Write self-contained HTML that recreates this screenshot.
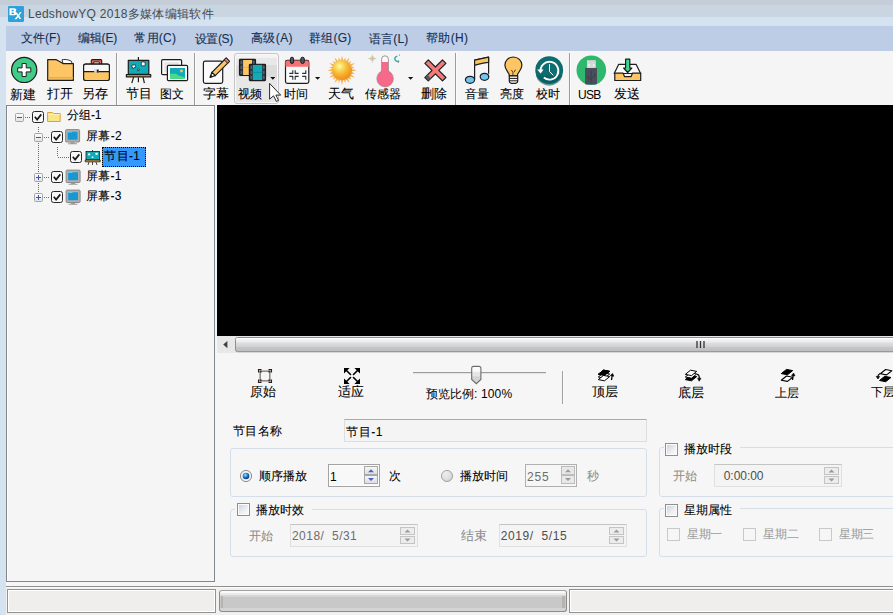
<!DOCTYPE html>
<html><head><meta charset="utf-8">
<style>
*{box-sizing:border-box}
html,body{margin:0;padding:0}
body{width:893px;height:615px;overflow:hidden;position:relative;background:#f6f6f6;font-family:"Liberation Sans",sans-serif;font-size:12px;color:#000}
.a{position:absolute}
.t{position:absolute;white-space:nowrap;line-height:14px;font-size:12px;-webkit-text-stroke:0.08px currentColor}
.ns{-webkit-text-stroke:0.1px currentColor}
.nt{-webkit-text-stroke:0}
.sep{position:absolute;width:1px;background:#9c9c9c;box-shadow:1px 0 0 #fcfcfc}
.gb{position:absolute;border:1px solid #d5dfe9;border-radius:3px}
.cb{position:absolute;width:13px;height:13px;border:1px solid #8e8f8f;background:linear-gradient(135deg,#c8d0dc,#eef0f2 60%,#fafafa);box-shadow:inset 0 0 0 1px #fbfbfb}
.cbd{position:absolute;width:13px;height:13px;border:1px solid #c9c9c9;background:#f6f6f6}
.spin{position:absolute;border:1px solid #e0e0e0;border-top-color:#bcbcbc;background:#f2f2f2}
.sb{position:absolute;width:15px;height:8px;border:1px solid #c0c0c0;background:#ececec}
.sb:after{content:"";position:absolute;left:4px;border-left:3px solid transparent;border-right:3px solid transparent}
.up:after{top:1px;border-bottom:3px solid #9a9a9a}
.dn:after{top:2px;border-top:3px solid #9a9a9a}
</style></head><body>
<!-- title bar -->
<div class="a" style="left:0;top:0;width:893px;height:5px;background:#c5ced8"></div>
<div class="a" style="left:0;top:5px;width:893px;height:12px;background:#c9d6e2"></div>
<div class="a" style="left:0;top:17px;width:893px;height:9px;background:#d5e3f0"></div>
<div class="a" style="left:0;top:26px;width:6px;height:589px;background:#d5e2ef"></div>
<!-- menu -->
<div class="a" style="left:6px;top:26px;width:887px;height:25px;background:#bccde5"></div>
<!-- toolbar -->
<div class="a" style="left:6px;top:51px;width:887px;height:54px;background:#f5f5f5"></div>
<div class="sep" style="left:116px;top:53px;height:52px"></div>
<div class="sep" style="left:194px;top:53px;height:52px"></div>
<div class="sep" style="left:455px;top:53px;height:52px"></div>
<div class="sep" style="left:569px;top:53px;height:52px"></div>
<!-- hover button -->
<div class="a" style="left:234px;top:53px;width:45px;height:51px;border:1px solid #c4c4c4;border-radius:3px;background:linear-gradient(#f3f3f3 0,#f3f3f3 4px,#e8e8e8 4px,#e8e8e8 11px,#dcdcdc 11px,#dcdcdc 23px,#e7e7e7 23px);box-shadow:inset 0 0 0 1px #fafafa"></div>
<!-- tree panel -->
<div class="a" style="left:6px;top:105px;width:209px;height:477px;border:1px solid #80878f;background:#f5f5f5;box-shadow:inset 1px 1px 0 #fdfdfd"></div>
<div class="a" style="left:102px;top:147px;width:44px;height:20px;background:#3399ff;border:1px dotted #000"></div>
<!-- preview -->
<div class="a" style="left:217px;top:105px;width:676px;height:231px;background:#000"></div>
<!-- h scrollbar -->
<div class="a" style="left:217px;top:336px;width:676px;height:17px;background:#e9e9e9"></div>
<!-- controls -->
<div class="sep" style="left:562px;top:371px;height:33px;background:#a0a0a0"></div>
<!-- name box -->
<div class="a" style="left:344px;top:419px;width:303px;height:23px;border:1px solid #dedede;border-top-color:#ababab;background:#f4f4f4"></div>
<!-- group boxes -->
<div class="gb" style="left:230px;top:448px;width:417px;height:49px"></div>
<div class="gb" style="left:230px;top:509px;width:417px;height:48px"></div>
<div class="gb" style="left:659px;top:447px;width:240px;height:50px"></div>
<div class="gb" style="left:659px;top:508px;width:240px;height:49px"></div>
<div class="a" style="left:235px;top:505px;width:77px;height:8px;background:#f6f6f6"></div>
<div class="a" style="left:664px;top:443px;width:76px;height:8px;background:#f6f6f6"></div>
<div class="a" style="left:664px;top:504px;width:76px;height:8px;background:#f6f6f6"></div>
<!-- checkboxes -->
<div class="cb" style="left:237px;top:503px"></div>
<div class="cb" style="left:665px;top:443px"></div>
<div class="cb" style="left:665px;top:504px"></div>
<div class="cbd" style="left:667px;top:528px"></div>
<div class="cbd" style="left:743px;top:528px"></div>
<div class="cbd" style="left:819px;top:528px"></div>
<!-- radios -->
<svg class="a" style="left:239px;top:469px" width="14" height="14" viewBox="0 0 14 14">
<defs><radialGradient id="rg1" cx="0.4" cy="0.35" r="0.6"><stop offset="0" stop-color="#9ee0ff"/><stop offset="0.5" stop-color="#2a8ad8"/><stop offset="1" stop-color="#0c3a80"/></radialGradient>
<radialGradient id="rg2" cx="0.4" cy="0.35" r="0.7"><stop offset="0" stop-color="#fafafa"/><stop offset="1" stop-color="#c8c8c8"/></radialGradient></defs>
<circle cx="7" cy="7" r="5.6" fill="#f4f4f4" stroke="#8c8c8c" stroke-width="1"/>
<circle cx="7" cy="7" r="3.3" fill="url(#rg1)"/>
</svg>
<svg class="a" style="left:440px;top:469px" width="14" height="14" viewBox="0 0 14 14">
<circle cx="7" cy="7" r="5.6" fill="url(#rg2)" stroke="#a8a8a8" stroke-width="1"/>
<circle cx="7" cy="7" r="3.8" fill="#e2e2e2" opacity="0.6"/>
</svg>
<!-- spin boxes -->
<div class="a" style="left:328px;top:464px;width:52px;height:23px;border:1px solid #a4a4a4;background:#f8f8f8;box-shadow:inset 0 0 0 1px #fdfdfd"></div>
<div class="a" style="left:364px;top:466px;width:14px;height:9px;border:1px solid #a8a8a8;background:linear-gradient(#f6f6f6,#dedede)"></div>
<div class="a" style="left:364px;top:475px;width:14px;height:9px;border:1px solid #a8a8a8;background:linear-gradient(#f6f6f6,#dedede)"></div>
<div class="a" style="left:525px;top:464px;width:52px;height:23px;border:1px solid #b0b0b0;background:#f6f6f6"></div>
<div class="a" style="left:561px;top:466px;width:14px;height:9px;border:1px solid #bcbcbc;background:#e8e8e8"></div>
<div class="a" style="left:561px;top:475px;width:14px;height:9px;border:1px solid #bcbcbc;background:#e8e8e8"></div>
<div class="a" style="left:290px;top:524px;width:128px;height:23px;border:1px solid #e0e0e0;border-top-color:#c4c4c4;background:#f4f4f4"></div>
<div class="a" style="left:400px;top:527px;width:15px;height:8px;border:1px solid #c4c4c4;background:#ececec"></div>
<div class="a" style="left:400px;top:536px;width:15px;height:8px;border:1px solid #c4c4c4;background:#ececec"></div>
<div class="a" style="left:499px;top:524px;width:128px;height:23px;border:1px solid #e0e0e0;border-top-color:#c4c4c4;background:#f4f4f4"></div>
<div class="a" style="left:609px;top:527px;width:15px;height:8px;border:1px solid #c4c4c4;background:#ececec"></div>
<div class="a" style="left:609px;top:536px;width:15px;height:8px;border:1px solid #c4c4c4;background:#ececec"></div>
<div class="a" style="left:714px;top:464px;width:128px;height:23px;border:1px solid #e0e0e0;border-top-color:#c4c4c4;background:#f4f4f4"></div>
<div class="a" style="left:824px;top:467px;width:15px;height:8px;border:1px solid #c4c4c4;background:#ececec"></div>
<div class="a" style="left:824px;top:476px;width:15px;height:8px;border:1px solid #c4c4c4;background:#ececec"></div>
<svg class="a" style="left:0;top:460px" width="893" height="90" viewBox="0 460 893 90">
<g fill="#4466c4"><path d="M368 472.3h6l-3-3z M368 478h6l-3 3z"/></g>
<g fill="#9a9a9a"><path d="M565 472.3h6l-3-3z M565 478h6l-3 3z"/>
<path d="M404.5 532.5h6l-3-3z M404.5 538.5h6l-3 3z M613.5 532.5h6l-3-3z M613.5 538.5h6l-3 3z M828.5 472.5h6l-3-3z M828.5 478.5h6l-3 3z"/></g>
</svg>
<!-- status -->
<div class="a" style="left:6px;top:586px;width:887px;height:1px;background:#8e8e8e"></div>
<div class="a" style="left:6px;top:587px;width:887px;height:28px;background:#f2efef"></div>
<div class="a" style="left:6px;top:587px;width:887px;height:1px;background:#fbfbfb"></div>
<div class="a" style="left:7px;top:589px;width:209px;height:24px;border:1px solid #929292;background:#f0eded;box-shadow:inset 0 0 0 1px #fff"></div>
<div class="a" style="left:569px;top:589px;width:330px;height:24px;border:1px solid #929292;background:#f0eded;box-shadow:inset 0 0 0 1px #fff"></div>
<div class="a" style="left:219px;top:590px;width:348px;height:22px;border:1px solid #8c8c8c;border-top-color:#a0a0a0;border-radius:3px;background:linear-gradient(#fafafa 0,#fafafa 2px,#eaeaea 2px,#eaeaea 4px,#d6d6d6 4px,#d6d6d6 6px,#c8c8c8 6px,#c8c8c8 17px,#d4d4d4 17px)"></div>
<div class="a" style="left:221px;top:596px;width:2px;height:12px;background:#b4b4b4"></div>
<div class="a" style="left:562px;top:596px;width:3px;height:12px;background:#b4b4b4"></div>
<!-- logo -->
<svg class="a" style="left:0;top:0" width="30" height="26" viewBox="0 0 30 26">
<rect x="8" y="6" width="16" height="16" rx="1.2" fill="#2ea0da"/>
<path d="M9.5 8.3h4.3c1.6 0 2.5 0.8 2.5 1.8c0 0.8-0.5 1.3-1.1 1.5c0.9 0.2 1.4 0.9 1.4 1.7c0 1.2-1 2-2.6 2H9.5z M11.6 9.8v1.4h1.5c0.5 0 0.8-0.3 0.8-0.7s-0.3-0.7-0.8-0.7z M11.6 12.5v1.5h1.7c0.6 0 0.9-0.3 0.9-0.75s-0.3-0.75-0.9-0.75z" fill="#fff"/>
<path d="M15.5 12.8l1.6 0l1.3 2l1.6-2.8l1.6 0l-2.4 3.8l2 3.3h-1.7l-1.3-2.1l-1.6 2.3h-2.2l2.8-3.4z" fill="#fff"/>
</svg>
<!-- toolbar icons -->
<svg class="a" style="left:0;top:50px" width="893" height="56" viewBox="0 50 893 56">
<g stroke="#1d1d1d" stroke-width="1.2" stroke-linejoin="round">
<!-- new -->
<circle cx="24.2" cy="69.9" r="12.6" fill="#3fcd88"/>
<path d="M22.1 63.5h4.1v4.4h4.6v4h-4.6v4.6h-4.1v-4.6h-4.4v-4h4.4z" fill="#fff" stroke-width="1"/>
<!-- open folder -->
<path d="M62 59.8c2 -0.6 6 -0.6 9.5 1.5l0.5 2.2h-9z" fill="#fff" stroke-width="0.9"/>
<path d="M47.7 59.7h8.6l6.8 3.9h10.3v16.7h-25.7z" fill="#fec565"/>
<path d="M48.3 77.8h25" stroke="#e0ac52" stroke-width="1.3"/>
<!-- save briefcase -->
<rect x="91.3" y="59.6" width="10.4" height="5.5" rx="1" fill="#f06a55" stroke-width="1.1"/>
<rect x="93.7" y="61.9" width="5.6" height="3" fill="#fafafa" stroke-width="0.9"/>
<rect x="83.6" y="64.2" width="25.8" height="16.3" rx="2" fill="#fec565"/>
<path d="M83.6 71.6v-5.4a2 2 0 0 1 2-2h21.8a2 2 0 0 1 2 2v5.4z" fill="#f7f7f7"/>
<rect x="94.2" y="69.2" width="4.5" height="3.5" fill="#d8d8d8" stroke="none"/>
<rect x="96.8" y="69.6" width="1.9" height="3" fill="#222" stroke="none"/>
<!-- easel -->
<path d="M138.4 57v3" />
<rect x="128.3" y="60.4" width="20.5" height="14" fill="#13aab8"/>
<path d="M126.4 74.6h24.3v2.3h-24.3z" fill="#e8b048"/>
<path d="M133.6 77.2l-1.8 6 M138.4 77.2v5 M143 77.2l1.4 6" fill="none"/>
<path d="M132 65h3.6v2.6h-1.4l-1 1.2l-0.2-1.2h-1z" fill="#fff" stroke-width="0.7"/>
<rect x="141.3" y="62" width="3.8" height="3.8" fill="#fff" stroke-width="0.7"/>
<path d="M137.8 68.6l1.9 1.2l-2 1.2z" fill="#fff" stroke-width="0.7"/>
<!-- picture -->
<rect x="161.6" y="59.6" width="20" height="15" rx="1.2" fill="#fafafa"/>
<rect x="164.3" y="62.3" width="14.4" height="10" fill="#e6e6e6" stroke="none"/>
<rect x="167.4" y="65.4" width="20.2" height="15.2" rx="1.2" fill="#fafafa"/>
<path d="M170 68h15v11h-15z" fill="#13aab8" stroke="none"/>
<path d="M170 73.8l6 0l3 2l2.5 0.5l3.5 1.2v1.5h-15z" fill="#4ad98a" stroke="none"/>
<circle cx="181.5" cy="71" r="1.4" fill="#fec565" stroke="none"/>
<!-- text pencil -->
<rect x="203.4" y="61.1" width="19.3" height="22.3" rx="1.8" fill="#fafafa"/>
<path d="M211.9 72.3l14.3-14.3l3.3 3.3l-14.3 14.3z" fill="#fec565"/>
<path d="M224.3 59.9l3.3 3.3l1.9-1.9l-3.3-3.3z" fill="#f07880" stroke-width="1"/>
<path d="M211.9 72.3l3.3 3.3l-5 1.7z" fill="#fff"/>
<path d="M210.2 77.3l1.8-0.6l-1.2-1.2z" fill="#111"/>
<!-- film -->
<rect x="239.5" y="59.4" width="16" height="16" rx="0.8" fill="#2c3338"/>
<rect x="243.1" y="60" width="8.9" height="15" fill="#fec565" stroke="none"/>
<path d="M243.1 67.4h8.9" stroke="#e0a848" stroke-width="0.8"/>
<g fill="#566068" stroke="none"><rect x="240.6" y="60.8" width="1.6" height="3.2"/><rect x="240.6" y="65.8" width="1.6" height="3.2"/><rect x="240.6" y="70.8" width="1.6" height="3.2"/><rect x="252.9" y="60.8" width="1.6" height="3.2"/></g>
<rect x="249.4" y="64.3" width="16.1" height="16.3" rx="0.8" fill="#2c3338"/>
<rect x="252.8" y="64.9" width="9.4" height="15.1" fill="#13aab8" stroke="none"/>
<path d="M252.8 72.4h9.4" stroke="#0e8a95" stroke-width="0.8"/>
<g fill="#566068" stroke="none"><rect x="250.5" y="65.8" width="1.6" height="3.2"/><rect x="250.5" y="70.8" width="1.6" height="3.2"/><rect x="250.5" y="75.8" width="1.6" height="3.2"/><rect x="263" y="65.8" width="1.6" height="3.2"/><rect x="263" y="70.8" width="1.6" height="3.2"/><rect x="263" y="75.8" width="1.6" height="3.2"/></g>
<!-- calendar -->
<rect x="285.5" y="60.4" width="23.3" height="23" rx="1.8" fill="#fafafa"/>
<path d="M285.5 66.8v-4.6a1.8 1.8 0 0 1 1.8-1.8h19.7a1.8 1.8 0 0 1 1.8 1.8v4.6z" fill="#f87272" stroke="none"/>
<rect x="290.4" y="57.2" width="3.2" height="6.3" rx="1.6" fill="#4b5763" stroke-width="1"/>
<rect x="300.8" y="57.2" width="3.5" height="6.3" rx="1.7" fill="#4b5763" stroke-width="1"/>
<path d="M289.3 73.4h3.5v-3.2 M298.6 73.4h-3.4v-3.2 M302.2 73.4h3.6v-3.2 M289.3 76.4h3.5v3.4 M298.6 76.4h-3.4v3.4 M302.2 76.4h3.6v3.4" fill="none" stroke="#2b3038" stroke-width="1.1"/>
<!-- delete X -->
<path d="M428.3 59.9l7.1 7.1l7.1-7.1l3.4 3.4l-7.1 7.1l7.1 7.1l-3.4 3.4l-7.1-7.1l-7.1 7.1l-3.4-3.4l7.1-7.1l-7.1-7.1z" fill="#f87878"/>
<path d="M425.1 77.1l2.3-2.3l3.4 3.4l-2.3 2.3z" fill="#505860" stroke="none"/>
<!-- music -->
<path d="M474.6 79.2v-19l14-3v16.5" fill="none"/>
<path d="M474.6 60.2l14-3.1v5.3c-4.8 0.4-9.2 1.6-14 2.8z" fill="#fcc460"/>
<ellipse cx="470" cy="79.8" rx="4.6" ry="3.5" fill="#70c6f2"/>
<ellipse cx="484.5" cy="76.8" rx="4.3" ry="3.5" fill="#70c6f2"/>
<!-- bulb -->
<path d="M513.3 57c-4.8 0-8.4 3.7-8.4 8.2c0 3.6 2.6 6 4.3 9.3v1.4h8.3v-1.4c1.8-3.3 4.4-5.7 4.4-9.3c0-4.5-3.8-8.2-8.6-8.2z" fill="#fec565"/>
<path d="M509.3 75.9h8.4v5.3c0 1-1.4 2.2-4.2 2.2s-4.2-1.2-4.2-2.2z" fill="#f8f8f8"/>
<path d="M509.3 78.4h8.4 M509.3 80.8h8.4" stroke-width="1"/>
<path d="M511.4 70l1.5 2.2v3.5 M515.5 69.6l-1.4 2.6" fill="none" stroke-width="0.8"/>
</g>
<!-- sun -->
<defs>
<radialGradient id="sg" cx="0.38" cy="0.3" r="0.75">
<stop offset="0" stop-color="#fffac0"/><stop offset="0.22" stop-color="#fae060"/><stop offset="0.5" stop-color="#f8b838"/><stop offset="0.8" stop-color="#f29a20"/><stop offset="1" stop-color="#ee8c18"/>
</radialGradient>
<radialGradient id="cg" cx="0.5" cy="0.5" r="0.5">
<stop offset="0" stop-color="#127a7a"/><stop offset="1" stop-color="#0b6a6c"/>
</radialGradient>
</defs>
<polygon points="342.00,55.50 343.25,60.78 345.42,57.55 345.67,61.43 349.40,57.48 347.84,62.68 351.33,60.97 349.62,64.46 354.82,62.90 350.87,66.63 354.75,66.88 351.52,69.05 356.80,70.30 351.52,71.55 354.75,73.72 350.87,73.97 354.82,77.70 349.62,76.14 351.33,79.63 347.84,77.92 349.40,83.12 345.67,79.17 345.42,83.05 343.25,79.82 342.00,85.10 340.75,79.82 338.58,83.05 338.33,79.17 334.60,83.12 336.16,77.92 332.67,79.63 334.38,76.14 329.18,77.70 333.13,73.97 329.25,73.72 332.48,71.55 327.20,70.30 332.48,69.05 329.25,66.88 333.13,66.63 329.18,62.90 334.38,64.46 332.67,60.97 336.16,62.68 334.60,57.48 338.33,61.43 338.58,57.55 340.75,60.78" fill="#f4a030" opacity="0.8"/>
<circle cx="342" cy="70.3" r="10" fill="url(#sg)"/>
<!-- thermometer -->
<g>
<circle cx="372.3" cy="58.6" r="2" fill="#f4e860" stroke="#c8c090" stroke-width="0.5"/>
<path d="M372.3 54.6v8 M368.3 58.6h8" stroke="#a8a8a8" stroke-width="0.5"/>
<path d="M397.3 56.2a2.6 2.6 0 1 0 1.8 4.6" fill="none" stroke="#40a8a8" stroke-width="1.5"/><circle cx="399.5" cy="55" r="0.5" fill="#555"/><circle cx="398.5" cy="62.3" r="0.5" fill="#777"/>
<path d="M381.6 59.2a3.4 3.4 0 0 1 6.8 0v13.5h-6.8z" fill="#fafafa" stroke="#707070" stroke-width="0.7"/>
<rect x="381.9" y="62" width="6.2" height="11" fill="#f86888" stroke="none"/>
<circle cx="385.1" cy="78.6" r="8.3" fill="#f86888" stroke="#8a8a8a" stroke-width="0.6"/>
<rect x="382" y="68" width="6" height="4" fill="#f86888" stroke="none"/>
</g>
<!-- clock -->
<circle cx="549.2" cy="70.2" r="13.9" fill="url(#cg)"/>

<circle cx="549.5" cy="70.5" r="8.3" fill="#0c6e70"/><path d="M535.8 75.5h26.8a13.9 13.9 0 0 1-26.8 0z" fill="#095a5e" opacity="0.6"/><path d="M540.6 71.8a8.9 8.9 0 1 1 3.2 5.8" fill="none" stroke="#fff" stroke-width="1.9"/>
<path d="M537.2 69.6l3.4 3.8l3-3.8z" fill="#fff"/>
<path d="M549.5 64.2v7.3l3.8 3.8" fill="none" stroke="#fff" stroke-width="1"/>
<!-- usb -->
<circle cx="591.3" cy="70.3" r="14.8" fill="#2db86e"/>
<rect x="587" y="60.2" width="8.8" height="8" fill="#d6d6d6"/>
<rect x="588.3" y="64.5" width="1.6" height="1.4" fill="#fff"/>
<rect x="593" y="64.5" width="1.6" height="1.4" fill="#fff"/>
<path d="M585.1 68h11.9v15.2a1.4 1.4 0 0 1-1.4 1.4h-9.1a1.4 1.4 0 0 1-1.4-1.4z" fill="#4a4e5c"/>
<path d="M591.2 70.5v13 M588 75.5v2.5l3 1.5 M594.7 73.5v3l-3.3 1.5" fill="none" stroke="#3a3d48" stroke-width="0.8"/>
<!-- send inbox -->
<g stroke="#1d1d1d" stroke-width="1.2" stroke-linejoin="round">
<path d="M618.6 64.4h17.6l4.4 9.1h-26.4z" fill="#fafafa"/>
<path d="M614.8 73.1h8.2l1.5 3.5h6.6l1.5-3.5h8.1v7.4h-25.9z" fill="#fec565"/>
<path d="M625.6 59.2h4.2v8.8h2l-4.1 4.5l-4.1-4.5h2z" fill="#40d890"/>
</g>
<!-- dropdown arrows -->
<path d="M270.2 77h5.2l-2.6 2.8z M315 77h5.2l-2.6 2.8z M408 77h5.2l-2.6 2.8z" fill="#111"/>
<!-- cursor -->
<path d="M269.6 83.4V99.2l3.9-3.4l2.9 5.6l2.2-1l-2.7-5.3h4.8z" fill="#fff" stroke="#111" stroke-width="0.9" stroke-linejoin="miter"/>
</svg>
<!-- tree -->
<svg class="a" style="left:0;top:100px" width="215" height="110" viewBox="0 100 215 110">
<defs>
<linearGradient id="eg" x1="0" y1="0" x2="0" y2="1"><stop offset="0" stop-color="#fdfdfd"/><stop offset="1" stop-color="#e2e2e2"/></linearGradient>
</defs>
<g fill="none" stroke="#6a6a6a" stroke-width="1" stroke-dasharray="1 1">
<path d="M25 117.5h6"/>
<path d="M38.5 127v6 M38.5 143v30 M38.5 183v10"/>
<path d="M44 137.5h6 M44 177.5h6 M44 197.5h6"/>
<path d="M57.5 147v10"/>
<path d="M58 157.5h11"/>
</g>
<g transform="translate(15 113)"><rect x="0.5" y="0.5" width="8" height="8" rx="1" fill="url(#eg)" stroke="#a4a4a4"/><path d="M2 4.5h5" stroke="#3a58b0" stroke-width="1"/></g>
<g transform="translate(32 111)"><rect x="0.5" y="0.5" width="11" height="11" rx="2" fill="#f8f8f8" stroke="#262626"/><path d="M2.8 5.8l2.3 2.8l4.2-5.2" fill="none" stroke="#1a1a1a" stroke-width="1.7"/></g>
<path d="M47.6 112.5h5l1 1h6.6v8h-12.6z" fill="#f8e688" stroke="#dca040" stroke-width="1"/>
<path d="M48 114.5h12" stroke="#fff4b8" stroke-width="0.8"/>
<g transform="translate(34 133)"><rect x="0.5" y="0.5" width="8" height="8" rx="1" fill="url(#eg)" stroke="#a4a4a4"/><path d="M2 4.5h5" stroke="#3a58b0" stroke-width="1"/></g>
<g transform="translate(51 131)"><rect x="0.5" y="0.5" width="11" height="11" rx="2" fill="#f8f8f8" stroke="#262626"/><path d="M2.8 5.8l2.3 2.8l4.2-5.2" fill="none" stroke="#1a1a1a" stroke-width="1.7"/></g>
<g transform="translate(65 129)"><rect x="0.6" y="0.6" width="14" height="12.4" rx="1" fill="#b0b0b0" stroke="#8a8a8a" stroke-width="1"/><rect x="2.7" y="2.7" width="9.8" height="8" fill="#1898d0"/><path d="M3 3h4" stroke="#7ad8f0" stroke-width="0.8"/><path d="M5.5 13.2h4v1h2.5v1h-9v-1h2.5z" fill="#9a9a9a"/></g>
<g transform="translate(70 151)"><rect x="0.5" y="0.5" width="11" height="11" rx="2" fill="#f8f8f8" stroke="#262626"/><path d="M2.8 5.8l2.3 2.8l4.2-5.2" fill="none" stroke="#1a1a1a" stroke-width="1.7"/></g>
<g stroke="#1d1d1d" stroke-width="0.8">
<rect x="86" y="151.5" width="13.5" height="8.5" fill="#13aab8"/>
<path d="M85.2 160h15v1.8h-15z" fill="#e0a848"/>
<path d="M92.5 150v1.5 M89 162l-1 3 M92.5 162v3 M96 162l1 3" fill="none"/>
</g>
<rect x="88" y="153.5" width="2.2" height="1.8" fill="#fff"/><rect x="95.5" y="152.8" width="2.2" height="2" fill="#fff"/><rect x="91.8" y="156.5" width="1.5" height="1.5" fill="#fff"/>
<g transform="translate(34 173)"><rect x="0.5" y="0.5" width="8" height="8" rx="1" fill="url(#eg)" stroke="#a4a4a4"/><path d="M2 4.5h5 M4.5 2v5" stroke="#3a58b0" stroke-width="1"/></g>
<g transform="translate(51 171)"><rect x="0.5" y="0.5" width="11" height="11" rx="2" fill="#f8f8f8" stroke="#262626"/><path d="M2.8 5.8l2.3 2.8l4.2-5.2" fill="none" stroke="#1a1a1a" stroke-width="1.7"/></g>
<g transform="translate(65.5 169.5)"><rect x="0.6" y="0.6" width="14" height="12.4" rx="1" fill="#b0b0b0" stroke="#8a8a8a" stroke-width="1"/><rect x="2.7" y="2.7" width="9.8" height="8" fill="#1898d0"/><path d="M3 3h4" stroke="#7ad8f0" stroke-width="0.8"/><path d="M5.5 13.2h4v1h2.5v1h-9v-1h2.5z" fill="#9a9a9a"/></g>
<g transform="translate(34 193)"><rect x="0.5" y="0.5" width="8" height="8" rx="1" fill="url(#eg)" stroke="#a4a4a4"/><path d="M2 4.5h5 M4.5 2v5" stroke="#3a58b0" stroke-width="1"/></g>
<g transform="translate(51 191)"><rect x="0.5" y="0.5" width="11" height="11" rx="2" fill="#f8f8f8" stroke="#262626"/><path d="M2.8 5.8l2.3 2.8l4.2-5.2" fill="none" stroke="#1a1a1a" stroke-width="1.7"/></g>
<g transform="translate(65.5 189.5)"><rect x="0.6" y="0.6" width="14" height="12.4" rx="1" fill="#b0b0b0" stroke="#8a8a8a" stroke-width="1"/><rect x="2.7" y="2.7" width="9.8" height="8" fill="#1898d0"/><path d="M3 3h4" stroke="#7ad8f0" stroke-width="0.8"/><path d="M5.5 13.2h4v1h2.5v1h-9v-1h2.5z" fill="#9a9a9a"/></g>
</svg>
<!-- scrollbar + controls -->
<svg class="a" style="left:215px;top:336px" width="678" height="70" viewBox="215 336 678 70">
<defs>
<linearGradient id="thg" x1="0" y1="0" x2="0" y2="1">
<stop offset="0" stop-color="#fbfbfb"/><stop offset="0.3" stop-color="#ececec"/><stop offset="0.42" stop-color="#dcdcdc"/><stop offset="0.62" stop-color="#d0d4da"/><stop offset="0.7" stop-color="#c6c6c6"/><stop offset="1" stop-color="#bdbdbd"/>
</linearGradient>
<linearGradient id="slg" x1="0" y1="0" x2="0" y2="1">
<stop offset="0" stop-color="#fdfdfd"/><stop offset="0.3" stop-color="#f6f6f6"/><stop offset="0.35" stop-color="#e6e6e6"/><stop offset="0.55" stop-color="#e6e6e6"/><stop offset="0.6" stop-color="#d4d4d4"/><stop offset="1" stop-color="#d4d4d4"/>
</linearGradient>
</defs>
<rect x="217" y="336" width="676" height="17" fill="#e8e8e8"/>
<path d="M227.4 341l-4.2 3.6l4.2 3.6z" fill="#404040"/>
<rect x="235.5" y="337.5" width="700" height="14.2" rx="2" fill="url(#thg)" stroke="#8e8e8e" stroke-width="1"/>
<path d="M236.5 338.5h680" stroke="#fff" stroke-width="1"/>
<path d="M697 341v7 M700.5 341v7 M704 341v7" stroke="#333" stroke-width="1.3"/>
<!-- 原始 -->
<g>
<rect x="260.2" y="371.2" width="9.6" height="9.6" fill="none" stroke="#8e8e8e" stroke-width="1.6"/>
<path d="M258.5 372.5v-3h3 M268.5 369.5h3v3 M271.5 379.5v3h-3 M261.5 382.5h-3v-3" fill="none" stroke="#2a1e1e" stroke-width="1.1"/>
<rect x="259.6" y="370.6" width="2" height="2" fill="#4a3434"/><rect x="268.4" y="370.6" width="2" height="2" fill="#4a3434"/><rect x="259.6" y="379.4" width="2" height="2" fill="#4a3434"/><rect x="268.4" y="379.4" width="2" height="2" fill="#4a3434"/>
</g>
<!-- 适应 -->
<g fill="#000">
<path d="M344 368h5.6l-5.6 5.6z M360 368h-5.6l5.6 5.6z M344 384h5.6l-5.6-5.6z M360 384v-5.6l-5.6 5.6z"/>
<path d="M346 370l4.5 4.5 M358 370l-4.5 4.5 M346 382l4.5-4.5 M358 382l-4.5-4.5" stroke="#000" stroke-width="1.6" stroke-linecap="round"/>
</g>
<!-- slider -->
<path d="M413 372.5h133" stroke="#9c9c9c" stroke-width="1"/>
<path d="M413 373.6h133" stroke="#e2e2e2" stroke-width="1"/>
<path d="M471.7 368.2a1.8 1.8 0 0 1 1.8-1.8h5.6a1.8 1.8 0 0 1 1.8 1.8v11.2l-4.6 4.3l-4.6-4.3z" fill="url(#slg)" stroke="#6c6c6c" stroke-width="1.1"/>
<!-- 顶层 -->
<g stroke="#000" stroke-linejoin="round">
<path d="M598.3 374.3l5.2-4.2l6.2 1.2l-5.2 4.2z" fill="#000" stroke-width="1"/>
<path d="M598.3 377l5.2-4.2l6.2 1.2l-5.2 4.2z" fill="#fff" stroke-width="1"/>
<path d="M598.3 379.6l5.2-4.2l6.2 1.2l-5.2 4.2z" fill="#fff" stroke-width="1"/>
<path d="M598.3 374.3l5.2-4.2l6.2 1.2l-5.2 4.2z" fill="#000" stroke-width="1"/>
<path d="M611.5 380l0.8-5" fill="none" stroke-width="1.3"/>
<path d="M610.3 375.6l2.2-2.2l1.4 2.8z" fill="#000" stroke-width="0.6"/>
</g>
<!-- 底层 -->
<g stroke="#000" stroke-linejoin="round">
<path d="M685.3 379.6l5.2-4.2l6.2 1.2l-5.2 4.2z" fill="#000" stroke-width="1"/>
<path d="M685.3 377l5.2-4.2l6.2 1.2l-5.2 4.2z" fill="#fff" stroke-width="1"/>
<path d="M685.3 374.4l5.2-4.2l6.2 1.2l-5.2 4.2z" fill="#fff" stroke-width="1"/>
<path d="M697 374.3c1.6 0 2.3 1.5 2.3 4" fill="none" stroke-width="1.2"/>
<path d="M697.6 378.2h3.4l-1.8 3z" fill="#000" stroke-width="0.6"/>
</g>
<!-- 上层 -->
<g stroke="#000" stroke-linejoin="round">
<path d="M781.3 380.2l5.2-4.2l6.2 1.2l-5.2 4.2z" fill="#fff" stroke-width="1.1"/>
<path d="M781.3 373.6l5.2-4.2l6.2 1.2l-5.2 4.2z" fill="#000" stroke-width="1"/>
<path d="M792.5 380l0.7-5" fill="none" stroke-width="1.3"/>
<path d="M791.5 375.4l2.1-2.3l1.4 2.8z" fill="#000" stroke-width="0.6"/>
</g>
<!-- 下层 -->
<g stroke="#000" stroke-linejoin="round">
<path d="M880.4 373.7l5.2-4.2l6.2 1.2l-5.2 4.2z" fill="#fff" stroke-width="1.1"/>
<path d="M879.5 380.5l5.2-4.2l6.2 1.2l-5.2 4.2z" fill="#000" stroke-width="1"/>
<path d="M880 373.5c-1.4 0.8-2.2 2-2.2 3.5" fill="none" stroke-width="1.2"/>
<path d="M876.2 376.4h3.4l-1.6 2.6z" fill="#000" stroke-width="0.6"/>
</g>
</svg>

<div class="t nt" id="title" style="left:27.90px;top:7.46px;color:#454b54;font-size:12.00px;letter-spacing:0.32px">LedshowYQ 2018多媒体编辑软件</div>
<div class="t ns" id="m1" style="left:20.96px;top:31.30px;color:#142f55;font-size:12.00px;letter-spacing:0.04px">文件(F)</div>
<div class="t ns" id="m2" style="left:78.00px;top:30.90px;color:#142f55;font-size:12.00px;letter-spacing:-0.20px">编辑(E)</div>
<div class="t ns" id="m3" style="left:134.26px;top:30.90px;color:#142f55;font-size:12.00px;letter-spacing:0.26px">常用(C)</div>
<div class="t ns" id="m4" style="left:194.80px;top:31.70px;color:#142f55;font-size:12.00px;letter-spacing:-0.40px">设置(S)</div>
<div class="t ns" id="m5" style="left:250.96px;top:31.30px;color:#142f55;font-size:12.00px;letter-spacing:0.40px">高级(A)</div>
<div class="t ns" id="m6" style="left:309.10px;top:30.90px;color:#142f55;font-size:12.00px;letter-spacing:0.18px">群组(G)</div>
<div class="t ns" id="m7" style="left:369.04px;top:32.10px;color:#142f55;font-size:12.00px;letter-spacing:0.16px">语言(L)</div>
<div class="t ns" id="m8" style="left:426.00px;top:31.30px;color:#142f55;font-size:12.00px;letter-spacing:0.34px">帮助(H)</div>
<div class="t" id="b1" style="left:10.00px;top:88.20px;color:#000;font-size:12.85px;letter-spacing:0.00px">新建</div>
<div class="t" id="b2" style="left:46.76px;top:87.00px;color:#000;font-size:12.51px;letter-spacing:0.00px">打开</div>
<div class="t" id="b3" style="left:81.94px;top:87.40px;color:#000;font-size:13.18px;letter-spacing:0.00px">另存</div>
<div class="t" id="b4" style="left:125.70px;top:87.40px;color:#000;font-size:12.73px;letter-spacing:0.00px">节目</div>
<div class="t" id="b5" style="left:160.08px;top:87.40px;color:#000;font-size:12.32px;letter-spacing:0.00px">图文</div>
<div class="t" id="b6" style="left:202.94px;top:87.40px;color:#000;font-size:12.62px;letter-spacing:0.00px">字幕</div>
<div class="t" id="b7" style="left:237.76px;top:86.90px;color:#000;font-size:12.38px;letter-spacing:0.00px">视频</div>
<div class="t" id="b8" style="left:284.00px;top:87.00px;color:#000;font-size:11.50px;letter-spacing:0.00px">时间</div>
<div class="t" id="b9" style="left:328.00px;top:87.00px;color:#000;font-size:12.69px;letter-spacing:0.00px">天气</div>
<div class="t" id="b10" style="left:364.80px;top:87.40px;color:#000;font-size:12.04px;letter-spacing:0.00px">传感器</div>
<div class="t" id="b11" style="left:421.14px;top:87.40px;color:#000;font-size:12.94px;letter-spacing:0.00px">删除</div>
<div class="t" id="b12" style="left:464.76px;top:87.40px;color:#000;font-size:11.50px;letter-spacing:0.00px">音量</div>
<div class="t" id="b13" style="left:499.76px;top:87.40px;color:#000;font-size:11.50px;letter-spacing:0.00px">亮度</div>
<div class="t" id="b14" style="left:535.80px;top:87.00px;color:#000;font-size:11.50px;letter-spacing:0.00px">校时</div>
<div class="t nt" id="b15" style="left:577.90px;top:87.78px;color:#000;font-size:12.00px;letter-spacing:-0.60px">USB</div>
<div class="t" id="b16" style="left:614.06px;top:87.40px;color:#000;font-size:12.67px;letter-spacing:0.00px">发送</div>
<div class="t" id="tr1" style="left:67.06px;top:108.44px;color:#000;font-size:12.00px;letter-spacing:-0.06px">分组-1</div>
<div class="t" id="tr2" style="left:85.94px;top:128.60px;color:#000;font-size:12.00px;letter-spacing:0.37px">屏幕-2</div>
<div class="t" id="tr3" style="left:104.40px;top:149.08px;color:#000;font-size:12.00px;letter-spacing:0.27px">节目-1</div>
<div class="t" id="tr4" style="left:86.00px;top:169.46px;color:#000;font-size:12.00px;letter-spacing:0.27px">屏幕-1</div>
<div class="t" id="tr5" style="left:86.00px;top:189.46px;color:#000;font-size:12.00px;letter-spacing:0.27px">屏幕-3</div>
<div class="t" id="c1" style="left:249.94px;top:385.20px;color:#000;font-size:12.70px;letter-spacing:0.00px">原始</div>
<div class="t" id="c2" style="left:337.80px;top:385.20px;color:#000;font-size:12.55px;letter-spacing:0.00px">适应</div>
<div class="t nt" id="c3" style="left:425.64px;top:387.36px;color:#000;font-size:12.00px;letter-spacing:0.12px">预览比例: 100%</div>
<div class="t" id="c4" style="left:591.76px;top:385.20px;color:#000;font-size:12.58px;letter-spacing:0.00px">顶层</div>
<div class="t" id="c5" style="left:678.00px;top:385.90px;color:#000;font-size:12.98px;letter-spacing:0.00px">底层</div>
<div class="t" id="c6" style="left:774.64px;top:385.60px;color:#000;font-size:12.00px;letter-spacing:0.00px">上层</div>
<div class="t" id="c7" style="left:870.66px;top:385.20px;color:#000;font-size:12.00px;letter-spacing:0.00px">下层</div>
<div class="t" id="f1" style="left:232.50px;top:424.10px;color:#000;font-size:12.00px;letter-spacing:0.50px">节目名称</div>
<div class="t" id="f2" style="left:345.96px;top:424.70px;color:#000;font-size:12.00px;letter-spacing:0.62px">节目-1</div>
<div class="t" id="f3" style="left:258.78px;top:469.32px;color:#000;font-size:12.14px;letter-spacing:0.00px">顺序播放</div>
<div class="t nt" id="f4" style="left:329.96px;top:469.72px;color:#000;font-size:12.00px;letter-spacing:0.00px">1</div>
<div class="t" id="f5" style="left:389.00px;top:468.92px;color:#000;font-size:12.00px;letter-spacing:0.00px">次</div>
<div class="t" id="f6" style="left:459.64px;top:469.32px;color:#000;font-size:12.00px;letter-spacing:0.00px">播放时间</div>
<div class="t nt" id="f7" style="left:526.98px;top:469.72px;color:#6d6d6d;font-size:12.00px;letter-spacing:0.78px">255</div>
<div class="t" id="f8" style="left:586.72px;top:469.32px;color:#8d8d8d;font-size:12.00px;letter-spacing:0.00px">秒</div>
<div class="t" id="f9" style="left:255.74px;top:502.84px;color:#000;font-size:12.45px;letter-spacing:0.00px">播放时效</div>
<div class="t" id="f10" style="left:248.80px;top:528.98px;color:#8d8d8d;font-size:11.62px;letter-spacing:0.00px">开始</div>
<div class="t nt" id="f11" style="left:291.94px;top:529.38px;color:#6d6d6d;font-size:12.00px;letter-spacing:0.48px">2018/&nbsp; 5/31</div>
<div class="t" id="f12" style="left:460.78px;top:529.38px;color:#8d8d8d;font-size:12.63px;letter-spacing:0.00px">结束</div>
<div class="t nt" id="f13" style="left:500.84px;top:529.38px;color:#4d4d4d;font-size:12.00px;letter-spacing:0.58px">2019/&nbsp; 5/15</div>
<div class="t" id="f14" style="left:683.80px;top:442.40px;color:#000;font-size:12.46px;letter-spacing:0.00px">播放时段</div>
<div class="t" id="f15" style="left:672.82px;top:468.66px;color:#8d8d8d;font-size:12.24px;letter-spacing:0.00px">开始</div>
<div class="t nt" id="f16" style="left:723.70px;top:469.06px;color:#4d4d4d;font-size:12.00px;letter-spacing:-0.03px">0:00:00</div>
<div class="t" id="f17" style="left:683.80px;top:503.30px;color:#000;font-size:11.50px;letter-spacing:0.00px">星期属性</div>
<div class="t" id="f18" style="left:686.74px;top:527.46px;color:#9d9d9d;font-size:12.00px;letter-spacing:-0.16px">星期一</div>
<div class="t" id="f19" style="left:762.80px;top:527.46px;color:#9d9d9d;font-size:12.00px;letter-spacing:-0.12px">星期二</div>
<div class="t" id="f20" style="left:838.82px;top:527.46px;color:#9d9d9d;font-size:12.00px;letter-spacing:-0.24px">星期三</div>
</body></html>
